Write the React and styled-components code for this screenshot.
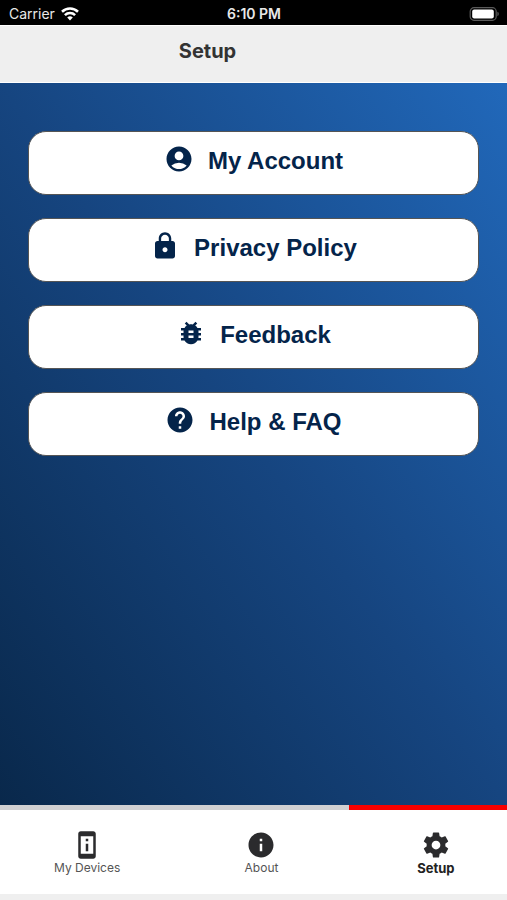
import React from 'react'
import styled, { createGlobalStyle } from 'styled-components'
import {
    MdAccountCircle,
    MdLock,
    MdBugReport,
    MdHelp,
    MdPermDeviceInformation,
    MdInfo,
} from 'react-icons/md'

const GlobalStyle = createGlobalStyle`
    * {
        box-sizing:border-box;
    }
    body {
        margin:0;
        background-color:#efefef;
        font-family:Inter, "Liberation Sans", sans-serif;
    }
`

const Container = styled.div`
    min-height:100vh;
    display:flex;
    flex-direction:column;
    overflow:hidden;
    padding-bottom:6px;
`

const StatusBar = styled.div`
    height:25px;
    padding:2px 8px 0 9px;
    display:grid;
    grid-template-columns:1fr auto 1fr;
    align-items:center;
    background-color:black;
    color:#e8e8e8;
    font-size:14px;
    line-height:20px;
`

const Carrier = styled.div`
    display:flex;
    align-items:center;
    gap:6px;
`

const Time = styled.time`
    font-size:14px;
    font-weight:600;
`

const Battery = styled.svg`
    justify-self:end;
`

const Header = styled.header`
    height:58px;
    padding:12px 92px 0 0;
    background-color:#efefef;
    border-top:1px solid white;
    border-bottom:1px solid white;
    text-align:center;
`

const Title = styled.h1`
    margin:0;
    color:#333;
    font-size:20px;
    font-weight:700;
    line-height:26px;
`

const Main = styled.main`
    flex:1;
    padding:48px 28px;
    display:flex;
    flex-direction:column;
    gap:23px;
    background:linear-gradient(to top right, #09284b, #164580 50%, #2168ba);
`

const MenuButton = styled.button`
    height:64px;
    padding:0 0 4px;
    display:flex;
    justify-content:center;
    align-items:center;
    gap:14px;
    background-color:white;
    border:1px solid #555;
    border-radius:18px;
    color:#04244a;
    font-family:"Liberation Sans", Arial, sans-serif;
    font-size:24px;
    font-weight:bold;
    cursor:pointer;

    svg {
        width:30px;
        height:30px;
        margin-bottom:4px;
    }
`

/* the last tab runs a little past the right edge */
const TabBar = styled.nav`
    height:89px;
    margin-right:-16px;
    display:grid;
    grid-template-columns:repeat(3, 1fr);
    background-color:white;
`

const Tab = styled.a`
    padding-top:20px;
    display:flex;
    flex-direction:column;
    align-items:center;
    border-top:5px solid ${props => props.$active ? '#f80000' : '#d0d0d2'};
    color:${props => props.$active ? '#222' : '#555'};
    font-size:${props => props.$active ? '13px' : '12px'};
    font-weight:${props => props.$active ? 700 : 400};
    line-height:16px;
    text-decoration:none;

    svg {
        width:30px;
        height:30px;
        color:#2b2b2d;
    }
`

const CogIcon = props => (
    <svg viewBox="0 0 24 24" fill="currentColor" {...props}>
        <path d="M12 15.5A3.5 3.5 0 0 1 8.5 12 3.5 3.5 0 0 1 12 8.5a3.5 3.5 0 0 1 3.5 3.5 3.5 3.5 0 0 1-3.5 3.5m7.43-2.53c.04-.32.07-.64.07-.97s-.03-.66-.07-1l2.11-1.63c.19-.15.24-.42.12-.64l-2-3.46c-.12-.22-.39-.31-.61-.22l-2.49 1c-.52-.39-1.06-.73-1.69-.98l-.37-2.65A.506.506 0 0 0 14 2h-4c-.25 0-.46.18-.5.42l-.37 2.65c-.63.25-1.17.59-1.69.98l-2.49-1c-.22-.09-.49 0-.61.22l-2 3.46c-.13.22-.07.49.12.64L4.57 11c-.04.34-.07.67-.07 1s.03.65.07.97l-2.11 1.66c-.19.15-.25.42-.12.64l2 3.46c.12.22.39.3.61.22l2.49-1.01c.52.4 1.06.74 1.69.99l.37 2.65c.04.24.25.42.5.42h4c.25 0 .46-.18.5-.42l.37-2.65c.63-.26 1.17-.59 1.69-.99l2.49 1.01c.22.08.49 0 .61-.22l2-3.46c.12-.22.07-.49-.12-.64z" />
    </svg>
)

const menuItems = [
    { label: 'My Account', Icon: MdAccountCircle },
    { label: 'Privacy Policy', Icon: MdLock },
    { label: 'Feedback', Icon: MdBugReport },
    { label: 'Help & FAQ', Icon: MdHelp },
]

const tabs = [
    { label: 'My Devices', href: '#devices', Icon: MdPermDeviceInformation },
    { label: 'About', href: '#about', Icon: MdInfo },
    { label: 'Setup', href: '#setup', Icon: CogIcon, active: true },
]

const WifiIcon = () => (
    <svg width="18" height="14" viewBox="0 0 18 14" fill="none" stroke="white" strokeWidth="2.6" aria-hidden="true">
        <path d="M1 4.7a11.6 11.6 0 0 1 16 0" />
        <path d="M3.9 8.1a7.4 7.4 0 0 1 10.2 0" />
        <path d="M9 13.6l-2.8-3a4.2 4.2 0 0 1 5.6 0z" fill="white" stroke="none" />
    </svg>
)

const BatteryIcon = () => (
    <Battery width="30" height="14" viewBox="0 0 30 14" aria-hidden="true">
        <rect x="1.2" y="0.7" width="26" height="12.6" rx="3.8" fill="none" stroke="#5a5a5a" strokeWidth="1.2" />
        <rect x="3.2" y="2.4" width="21.6" height="9.2" rx="2" fill="white" />
        <path d="M28.4 4.8a2.4 2.4 0 0 1 0 4.4z" fill="#5a5a5a" />
    </Battery>
)

const App = () => {
    return (
        <Container>
            <GlobalStyle />
            <StatusBar>
                <Carrier>Carrier <WifiIcon /></Carrier>
                <Time>6:10 PM</Time>
                <BatteryIcon />
            </StatusBar>
            <Header>
                <Title>Setup</Title>
            </Header>
            <Main>
                {menuItems.map(({ label, Icon }) => (
                    <MenuButton key={label} type="button">
                        <Icon aria-hidden="true" />
                        {label}
                    </MenuButton>
                ))}
            </Main>
            <TabBar>
                {tabs.map(({ label, href, Icon, active }) => (
                    <Tab key={label} href={href} $active={active} aria-current={active ? 'page' : undefined}>
                        <Icon aria-hidden="true" />
                        {label}
                    </Tab>
                ))}
            </TabBar>
        </Container>
    )
}

export default App
